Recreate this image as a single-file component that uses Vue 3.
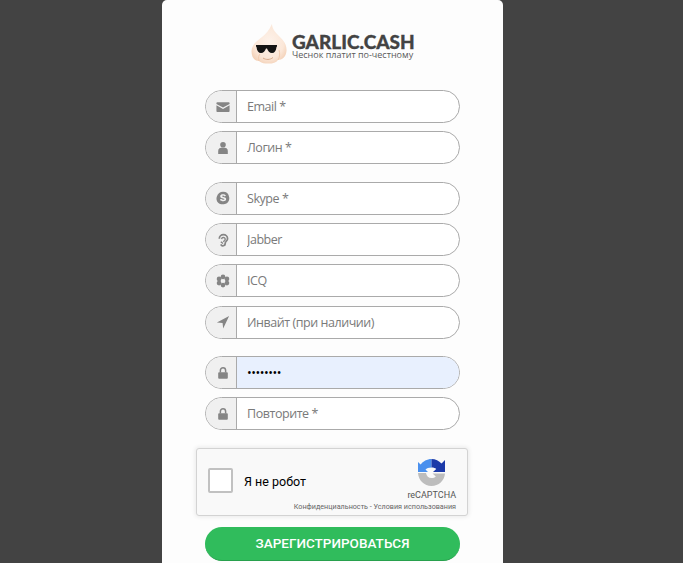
<template>
  <main class="page">
    <section class="card">
      <div class="logo">
        <svg class="garlic" width="36" height="40" viewBox="0 0 36 40">
          <defs>
            <radialGradient id="bulb" cx="50%" cy="45%" r="60%">
              <stop offset="0%" stop-color="#fdf2ea" />
              <stop offset="70%" stop-color="#fbe7d8" />
              <stop offset="100%" stop-color="#f3d0b6" />
            </radialGradient>
          </defs>
          <path d="M21 0C21 4 24 8 27 11C31 15 36 19 35.500 27C35 33 31 36 27 36C25 39 20 40 16 39.500C12 40 9 38 8 37C3 37 .5 33 .5 27C1 20 6 17 11 13C15 10 18 6 21 0Z" fill="url(#bulb)" />
          <path d="M8 37C7 33 8 31 9 30M27 36C29 33 29 29 28 26" fill="none" stroke="#f1caae" stroke-width="1" />
          <path d="M12 34C15 36 19 36 22 33.500" fill="none" stroke="#d8ab8c" stroke-width="1" />
          <path d="M5 21H26V22.500L25.500 23C25 27 23.500 29 21 29C18.500 29 17 27 16 24.500H15C14 27 12.500 29 10 29C7.500 29 6 27 5.500 23L5 22.500Z" fill="#141414" />
        </svg>
        <div class="brand">
          <span class="name">GARLIC.CASH</span>
          <span class="slogan">Чеснок платит по-честному</span>
        </div>
      </div>

      <form class="form" @submit.prevent>
        <div v-for="(group, i) in groups" :key="i" class="group">
          <label v-for="field in group" :key="field.placeholder" class="field">
            <span class="addon">
              <svg width="14" height="14" viewBox="0 0 16 16" v-html="icons[field.icon]"></svg>
            </span>
            <input
              class="input"
              :class="{ filled: field.value }"
              :type="field.type || 'text'"
              :placeholder="field.placeholder"
              :value="field.value"
            >
          </label>
        </div>

        <div class="captcha">
          <span class="check"></span>
          <span class="robot">Я не робот</span>
          <div class="brand-box">
            <svg width="27" height="27" viewBox="0 0 27 27">
              <path d="M13.500 0C9 0 5 2.300 2.600 5.600L0 3V13H10L7.500 10.500C8.500 9.200 10.800 8.500 13.500 8.500Z" fill="#4a90ee" />
              <path d="M13.500 0C17.500 0 21 1.800 23.500 4.500L27 1V13H15L18.200 10C17.300 9 15.700 8.500 13.500 8.500Z" fill="#1c3aa9" />
              <path d="M0 14H8C8.500 17 10.500 19 13.500 19C15.300 19 16.700 18.500 17.800 17.500L14.500 14.500H27C26.500 21.500 20.700 27 13.500 27C6.300 27 .5 21.500 0 14Z" fill="#bdbdbd" />
            </svg>
            <span class="re">reCAPTCHA</span>
          </div>
          <span class="terms">Конфиденциальность - Условия использования</span>
        </div>

        <button class="submit" type="submit">ЗАРЕГИСТРИРОВАТЬСЯ</button>
      </form>
    </section>
  </main>
</template>

<script setup>
const icons = {
  mail: '<path d="M1.500 2.500h13c.6 0 1 .4 1 1v1.100L8 8.700.5 4.600V3.500c0-.6.4-1 1-1zM.5 6.100 8 10.200l7.500-4.100v6.400c0 .7-.5 1.200-1.200 1.200H1.700c-.7 0-1.200-.5-1.200-1.200z" fill="#858585"/>',
  user: '<circle cx="8" cy="4.300" r="3.200" fill="#858585"/><path d="M2.500 14.800v-3.500C2.500 9 4.200 7.800 6 7.800h4c1.800 0 3.500 1.200 3.500 3.500v3.500z" fill="#858585"/>',
  skype: '<path fill-rule="evenodd" d="M8 .8a7 7 0 0 1 7 6c.9 3.300-1.400 7.800-5 8.100-2 .5-5.700.5-7.500-1.500C.6 11.700 0 8.600 1 6.300 2 3 4.700.8 8 .8zM4.800 5.900c0 3 4.800 2.100 4.800 3.500 0 1.200-2.600.9-3.700-.6L4.400 10c1.700 2.300 7.200 2.500 7.200-.8C11.600 6.400 7 7.100 7 5.900c0-1 2-.9 3 .3l1.400-1C9.700 3 4.800 3.200 4.800 5.900z" fill="#858585"/>',
  ear: '<path d="M3.800 6.500a4.700 4.700 0 0 1 9.400 0c0 2.600-2.700 3.200-2.700 5.300a2.600 2.600 0 0 1-5 1.200" fill="none" stroke="#858585" stroke-width="2"/><path d="M6.500 7a2 2 0 1 1 3.400 1.500L8.300 10M5.500 10l2.500 2" fill="none" stroke="#858585" stroke-width="1.600"/>',
  flower: '<g fill="#858585"><circle cx="8" cy="3.300" r="2.700"/><circle cx="8" cy="12.700" r="2.700"/><circle cx="3.500" cy="5.600" r="2.700"/><circle cx="12.500" cy="5.600" r="2.700"/><circle cx="3.500" cy="10.400" r="2.700"/><circle cx="12.500" cy="10.400" r="2.700"/></g><circle cx="8" cy="8" r="1.200" fill="#f0f0f0"/>',
  send: '<path d="M15 1 1 8.500l6.500.7.700 6.300z" fill="#858585"/>',
  lock: '<path d="M3.500 7h9c.6 0 1 .4 1 1v5.500c0 .6-.4 1-1 1h-9c-.6 0-1-.4-1-1V8c0-.6.4-1 1-1z" fill="#858585"/><path d="M5 7.500V5a3 3 0 0 1 6 0v2.500" fill="none" stroke="#858585" stroke-width="1.700"/>'
}

const groups = [
  [
    { icon: 'mail', placeholder: 'Email *' },
    { icon: 'user', placeholder: 'Логин *' }
  ],
  [
    { icon: 'skype', placeholder: 'Skype *' },
    { icon: 'ear', placeholder: 'Jabber' },
    { icon: 'flower', placeholder: 'ICQ' },
    { icon: 'send', placeholder: 'Инвайт (при наличии)' }
  ],
  [
    { icon: 'lock', placeholder: 'Пароль *', type: 'password', value: '12345678' },
    { icon: 'lock', placeholder: 'Повторите *', type: 'password' }
  ]
]
</script>

<style>
html, body { height: 100%; margin: 0; overflow: hidden; background: #434343; }
</style>

<style scoped>
.page { display: flex; padding-left: 162px; height: 563px; overflow: hidden; background: #434343; font-family: "Open Sans", sans-serif; }
.card { width: 341px; height: 620px; background: #fdfdfd; border-radius: 5px 5px 0 0; box-sizing: border-box; padding-top: 24px; }
.logo { display: flex; align-items: center; justify-content: center; gap: 5px; height: 40px; }
.brand { display: flex; flex-direction: column; width: 122px; margin-top: 5px; }
.name { font-family: Lato, sans-serif; font-weight: 900; font-size: 19px; line-height: 17px; color: #434343; white-space: nowrap; -webkit-text-stroke: 0.3px #434343; }
.slogan { font-size: 9px; line-height: 10px; color: #5a5a5a; white-space: nowrap; }
.form { display: flex; flex-direction: column; align-items: center; margin-top: 26px; }
.group { display: flex; flex-direction: column; gap: 8.3px; margin-bottom: 17.5px; }
.field { display: flex; width: 255px; height: 33px; box-sizing: border-box; border: 1px solid #aaa; border-radius: 17px; overflow: hidden; background: #fff; }
.addon { display: flex; align-items: center; justify-content: center; flex: none; width: 27px; padding-left: 3px; background: #f0f0f0; border-right: 1px solid #aaa; }
.input { flex: 1; min-width: 0; border: 0; outline: 0; padding: 0 10px; font: 12.5px "Open Sans", sans-serif; letter-spacing: -0.45px; color: #000; background: transparent; }
.input::placeholder { color: #7a7a7a; opacity: 1; }
.input.filled { background: #e8f0fe; }
.captcha { position: relative; width: 272px; height: 68px; margin-left: -1px; box-sizing: border-box; display: flex; align-items: center; background: #f9f9f9; border: 1px solid #d3d3d3; border-radius: 3px; box-shadow: 0 0 4px 1px rgba(0, 0, 0, 0.08); padding-left: 11px; font-family: Roboto, sans-serif; }
.check { width: 25px; height: 25px; margin-top: -3px; box-sizing: border-box; background: #fff; border: 2px solid #c1c1c1; border-radius: 2px; }
.robot { margin-left: 11px; font-size: 12.500px; color: #000; }
.brand-box { position: absolute; top: 10px; right: 11px; display: flex; flex-direction: column; align-items: center; gap: 3px; }
.re { font-size: 9px; line-height: 12px; color: #555; }
.terms { position: absolute; right: 11px; bottom: 3px; font-size: 7.200px; line-height: 10px; color: #666; white-space: nowrap; }
.submit { width: 255px; height: 34px; margin-top: 11px; flex: none; border: 0; border-bottom: 1px solid #27a04d; border-radius: 17px; background: #30bc5c; color: #fff; font: 500 13.500px Roboto, sans-serif; cursor: pointer; }
</style>
